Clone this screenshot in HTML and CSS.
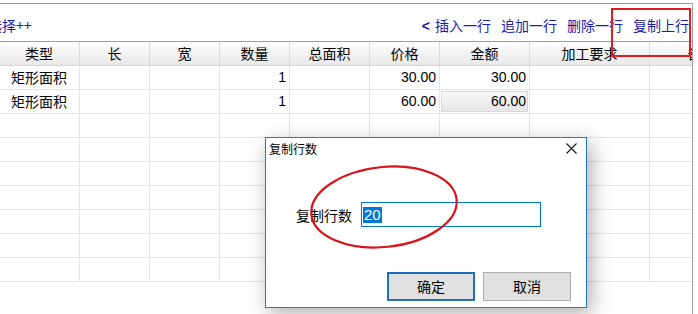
FILE: index.html
```html
<!DOCTYPE html>
<html lang="zh-CN">
<head>
    <meta charset="UTF-8">
    <title>复制行数</title>
    <link rel="stylesheet" href="styles.css">
</head>
<body>
<div class="sheet">
    <div class="toolbar">
        <span class="pick">选择++</span>
        <div class="actions">
            <span><b>&lt;</b>插入一行</span>
            <span>追加一行</span>
            <span>删除一行</span>
            <span>复制上行</span>
        </div>
    </div>
    <div class="grid">
        <div class="row head">
            <div class="cell">类型</div>
            <div class="cell">长</div>
            <div class="cell">宽</div>
            <div class="cell">数量</div>
            <div class="cell">总面积</div>
            <div class="cell">价格</div>
            <div class="cell">金额</div>
            <div class="cell">加工要求</div>
            <div class="cell">备注</div>
        </div>
        <div class="row">
            <div class="cell">矩形面积</div>
            <div class="cell"></div>
            <div class="cell"></div>
            <div class="cell num">1</div>
            <div class="cell"></div>
            <div class="cell num">30.00</div>
            <div class="cell num">30.00</div>
            <div class="cell"></div>
            <div class="cell"></div>
        </div>
        <div class="row">
            <div class="cell">矩形面积</div>
            <div class="cell"></div>
            <div class="cell"></div>
            <div class="cell num">1</div>
            <div class="cell"></div>
            <div class="cell num">60.00</div>
            <div class="cell num raised">60.00</div>
            <div class="cell"></div>
            <div class="cell"></div>
        </div>
        <div class="row"><div class="cell"></div><div class="cell"></div><div class="cell"></div><div class="cell"></div><div class="cell"></div><div class="cell"></div><div class="cell"></div><div class="cell"></div><div class="cell"></div></div>
        <div class="row"><div class="cell"></div><div class="cell"></div><div class="cell"></div><div class="cell"></div><div class="cell"></div><div class="cell"></div><div class="cell"></div><div class="cell"></div><div class="cell"></div></div>
        <div class="row"><div class="cell"></div><div class="cell"></div><div class="cell"></div><div class="cell"></div><div class="cell"></div><div class="cell"></div><div class="cell"></div><div class="cell"></div><div class="cell"></div></div>
        <div class="row"><div class="cell"></div><div class="cell"></div><div class="cell"></div><div class="cell"></div><div class="cell"></div><div class="cell"></div><div class="cell"></div><div class="cell"></div><div class="cell"></div></div>
        <div class="row"><div class="cell"></div><div class="cell"></div><div class="cell"></div><div class="cell"></div><div class="cell"></div><div class="cell"></div><div class="cell"></div><div class="cell"></div><div class="cell"></div></div>
        <div class="row"><div class="cell"></div><div class="cell"></div><div class="cell"></div><div class="cell"></div><div class="cell"></div><div class="cell"></div><div class="cell"></div><div class="cell"></div><div class="cell"></div></div>
        <div class="row"><div class="cell"></div><div class="cell"></div><div class="cell"></div><div class="cell"></div><div class="cell"></div><div class="cell"></div><div class="cell"></div><div class="cell"></div><div class="cell"></div></div>
    </div>
</div>

<div class="dialog">
    <div class="dialog-title">
        <span>复制行数</span>
        <svg class="close" width="11" height="11" viewBox="0 0 11 11">
            <path d="M0.5 0.5 L10.5 10.5 M10.5 0.5 L0.5 10.5" stroke="#111" stroke-width="1.1" fill="none"/>
        </svg>
    </div>
    <div class="field">
        <label>复制行数</label>
        <div class="input"><span class="sel">20</span></div>
    </div>
    <div class="buttons">
        <div class="btn default">确定</div>
        <div class="btn">取消</div>
    </div>
</div>

<svg class="marks" width="698" height="314" viewBox="0 0 698 314">
    <rect x="612" y="9" width="78" height="47" fill="none" stroke="#e31b23" stroke-width="2"/>
    <ellipse cx="384" cy="207" rx="73" ry="40" transform="rotate(-6 384 207)" fill="none" stroke="#d9141b" stroke-width="2.2"/>
</svg>
</body>
</html>
```

FILE: styles.css
```css
*{
    margin: 0;
    padding: 0;
    box-sizing: border-box;
}
html,body{
    width: 698px;
    height: 314px;
    overflow: hidden;
    background: #fff;
    font-family: "Noto Sans CJK SC", sans-serif;
    font-size: 14px;
    color: #000;
}
.sheet{
    margin-top: 3px;
    width: 693px;
    height: 311px;
    border-top: 1px solid #a0a0a0;
    border-right: 1px solid #a0a0a0;
    overflow: hidden;
}
.toolbar{
    display: flex;
    justify-content: space-between;
    height: 37px;
    padding-top: 11px;
    line-height: 20px;
    color: #1d1dab;
}
.pick{
    margin-left: -12px;
}
.actions{
    display: flex;
    gap: 10px;
    padding-right: 3px;
}
.actions b{
    font-family: "Liberation Sans", sans-serif;
    font-weight: bold;
    margin-right: 5px;
}
.grid{
    margin-left: -1px;
    width: 755px;
}
.row{
    display: grid;
    grid-template-columns: 81px 70px 70px 70px 80px 70px 90px 120px 104px;
    height: 24px;
    border-bottom: 1px solid #e4e4e4;
}
.row.head{
    height: 25px;
    border-top: 1px solid #a0a0a0;
    border-bottom-color: #d4d4d4;
    background: linear-gradient(#fdfdfd, #e9e9e9);
}
.cell{
    border-right: 1px solid #e4e4e4;
    line-height: 23px;
    text-align: center;
    white-space: nowrap;
    overflow: hidden;
}
.head .cell{
    border-right-color: #dadada;
}
.num{
    text-align: right;
    padding-right: 3px;
    font-family: "Liberation Sans", sans-serif;
}
.raised{
    background: linear-gradient(#f9f9f9, #e5e5e5);
    box-shadow: inset 0 0 0 1px #fff, inset 0 0 0 2px #d9d9d9;
}

/* 弹出的对话框 */
.dialog{
    position: absolute;
    left: 265px;
    top: 137px;
    width: 322px;
    height: 171px;
    background: #fff;
    border: 1px solid #1f7ccc;
    box-shadow: 4px 6px 20px rgba(0,0,0,0.32);
}
.dialog-title{
    display: flex;
    justify-content: space-between;
    align-items: center;
    height: 20px;
    padding: 0 9px 0 3px;
    font-size: 12px;
}
.close{
    display: block;
}
.field{
    display: flex;
    align-items: center;
    gap: 9px;
    margin-top: 44px;
    padding-left: 30px;
}
.field label{
    font-size: 14px;
}
.input{
    width: 180px;
    height: 25px;
    border: 1px solid #0078d7;
    padding: 1px 0 0 1px;
}
.sel{
    display: inline-block;
    height: 16px;
    line-height: 16px;
    padding: 0 1px;
    background: #0078d7;
    color: #fff;
    font-family: "Liberation Sans", sans-serif;
    font-size: 15px;
    margin-top: 1px;
}
.buttons{
    display: flex;
    justify-content: flex-end;
    gap: 8px;
    margin-top: 45px;
    padding-right: 15px;
}
.btn{
    width: 88px;
    height: 29px;
    line-height: 27px;
    text-align: center;
    background: #e1e1e1;
    border: 1px solid #adadad;
}
.btn.default{
    border: 2px solid #1d6fbf;
    line-height: 25px;
}
.marks{
    position: absolute;
    left: 0;
    top: 0;
    pointer-events: none;
}
```
